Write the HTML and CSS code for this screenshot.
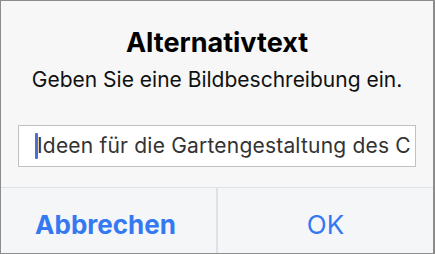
FILE: index.html
```html
<!DOCTYPE html>
<html lang="de">
<head>
<meta charset="utf-8">
<link rel="stylesheet" href="styles.css">
</head>
<body>
<div class="dialog">
  <div class="head">
    <div class="title">Alternativtext</div>
    <div class="subtitle">Geben Sie eine Bildbeschreibung ein.</div>
  </div>
  <div class="field"><span class="caret"></span><span class="value">Ideen für die Gartengestaltung des C</span></div>
  <div class="actions">
    <div class="btn cancel">Abbrechen</div>
    <div class="btn ok">OK</div>
  </div>
</div>
</body>
</html>
```
FILE: styles.css
```css
html, body { margin: 0; padding: 0; }
body { background: #f7f7f7; font-family: Inter, "Liberation Sans", sans-serif; }
.dialog {
  width: 435px;
  height: 254px;
  box-sizing: border-box;
  border: 1px solid #8c8c8c;
  border-right-width: 2px;
  background: #f7f7f7;
  display: flex;
  flex-direction: column;
}
.head { padding-top: 26px; text-align: center; }
.title {
  font-size: 27px;
  font-weight: 700;
  line-height: 32px;
  color: #000;
}
.subtitle {
  margin-top: 9px;
  font-size: 21px;
  line-height: 24px;
  color: #111;
}
.field {
  margin: 33px 0 0 17px;
  width: 398px;
  height: 42px;
  box-sizing: border-box;
  border: 1px solid #c2c2c2;
  background: #fff;
  display: flex;
  align-items: center;
  padding-left: 16px;
  overflow: hidden;
  white-space: nowrap;
}
.caret {
  flex: none;
  width: 3px;
  height: 26px;
  border-radius: 1px;
  background: #4c6fd6;
  margin-right: -1px;
}
.value {
  font-size: 21px;
  letter-spacing: 0.2px;
  color: #333;
  line-height: 24px;
}
.actions {
  margin-top: 20px;
  flex: 1;
  border-top: 1px solid #dde1e8;
  display: grid;
  grid-template-columns: 215px 1fr;
  background: #f5f6f8;
}
.btn {
  display: flex;
  align-items: center;
  justify-content: center;
  padding-top: 9px;
  font-size: 26px;
  line-height: 32px;
  color: #3479f2;
}
.cancel { font-weight: 700; padding-right: 6px; }
.ok { border-left: 2px solid #dde1e8; }
```
